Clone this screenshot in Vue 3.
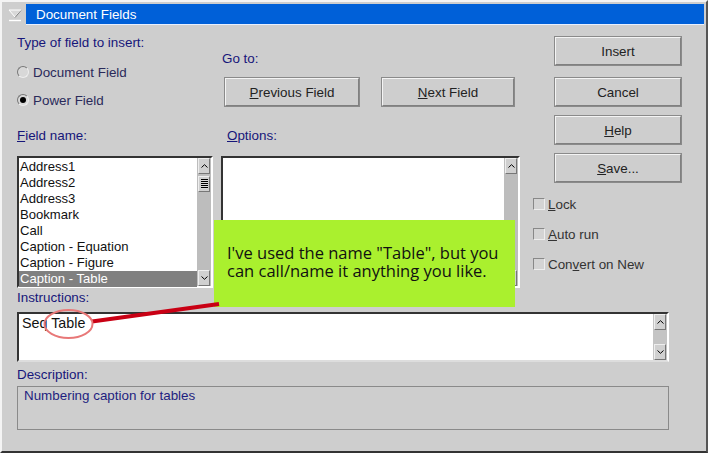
<script setup>
const fields = ['Address1', 'Address2', 'Address3', 'Bookmark', 'Call', 'Caption - Equation', 'Caption - Figure', 'Caption - Table']
</script>

<template>
  <div class="window">
    <div class="titlebar">
      <div class="sys">
        <svg width="14" height="14" viewBox="0 0 14 14">
          <path d="M1 2h12L7 9z" fill="#d8d8d8" stroke="#fff" stroke-width="1" />
          <path d="M1 12.5h12" stroke="#fff" stroke-width="1.4" />
          <path d="M7 9.5L13 2.5" stroke="#808080" stroke-width="1" />
        </svg>
      </div>
      <div class="title">Document Fields</div>
    </div>
    <div class="body">
      <div class="main">
        <div class="top">
          <div class="type">
            <div class="lbl">Type of field to insert:</div>
            <div class="radio first"><span class="dot"></span>Document Field</div>
            <div class="radio"><span class="dot on"></span>Power Field</div>
          </div>
          <div class="goto">
            <div class="lbl">Go to:</div>
            <div class="gobtns">
              <div class="btn prev"><span><u>P</u>revious Field</span></div>
              <div class="btn next"><span><u>N</u>ext Field</span></div>
            </div>
          </div>
        </div>
        <div class="labels">
          <div class="lbl fn"><u>F</u>ield name:</div>
          <div class="lbl op"><u>O</u>ptions:</div>
        </div>
        <div class="lists">
          <div class="list names">
            <div class="items">
              <div v-for="f in fields" :key="f" class="item" :class="{ sel: f === 'Caption - Table' }">{{ f }}</div>
            </div>
            <div class="sb">
              <div class="arrow"><svg width="7" height="4" viewBox="0 0 7 4"><path d="M0.5 3.5L3.5 0.7L6.5 3.5" fill="none" stroke="#000" /></svg></div>
              <div class="thumb"></div>
              <div class="gap"></div>
              <div class="arrow"><svg width="7" height="4" viewBox="0 0 7 4"><path d="M0.5 0.5L3.5 3.3L6.5 0.5" fill="none" stroke="#000" /></svg></div>
            </div>
          </div>
          <div class="list options">
            <div class="items"></div>
            <div class="sb">
              <div class="arrow"><svg width="7" height="4" viewBox="0 0 7 4"><path d="M0.5 3.5L3.5 0.7L6.5 3.5" fill="none" stroke="#000" /></svg></div>
              <div class="gap"></div>
              <div class="arrow"></div>
            </div>
          </div>
        </div>
      </div>
      <div class="side">
        <div class="btn act">Insert</div>
        <div class="btn act c2">Cancel</div>
        <div class="btn act c3"><span><u>H</u>elp</span></div>
        <div class="btn act c3"><span><u>S</u>ave...</span></div>
        <div class="checks">
          <div class="check"><span class="box"></span><span><u>L</u>ock</span></div>
          <div class="check"><span class="box"></span><span><u>A</u>uto run</span></div>
          <div class="check"><span class="box"></span><span>Con<u>v</u>ert on New</span></div>
        </div>
      </div>
      <div class="bottom">
        <div class="lbl">Instructions:</div>
        <div class="instr">
          <div class="instr-text">Seq Table</div>
          <div class="sb sb2">
            <div class="arrow"><svg width="7" height="4" viewBox="0 0 7 4"><path d="M0.5 3.5L3.5 0.7L6.5 3.5" fill="none" stroke="#000" /></svg></div>
            <div class="gap"></div>
            <div class="arrow"><svg width="7" height="4" viewBox="0 0 7 4"><path d="M0.5 0.5L3.5 3.3L6.5 0.5" fill="none" stroke="#000" /></svg></div>
          </div>
        </div>
        <div class="lbl dl">Description:</div>
        <div class="desc">Numbering caption for tables</div>
      </div>
    </div>

    <div class="callout">I've used the name "Table", but you can call/name it anything you like.</div>
    <svg class="marks" width="708" height="453" viewBox="0 0 708 453">
      <path d="M92 321.5L219 304" stroke="#c90014" stroke-width="4" fill="none" />
      <ellipse cx="68.5" cy="324" rx="24" ry="14" fill="none" stroke="#e87878" stroke-width="2" />
    </svg>
  </div>
</template>

<style>
html, body { margin: 0; background: #cecece; }
</style>

<style scoped>
.window {
  position: relative;
  width: 708px;
  height: 453px;
  box-sizing: border-box;
  background: #cecece;
  border-top: 2px solid #f4f4f4;
  border-left: 2px solid #f4f4f4;
  border-right: 2px solid #555;
  border-bottom: 2px solid #333;
  font-family: "Liberation Sans", Arial, sans-serif;
  font-size: 13.4px;
  color: #111;
  overflow: hidden;
}
.titlebar { display: flex; align-items: center; height: 21px; margin: 2px 2px 0 0; }
.sys { width: 24px; padding-left: 6px; box-sizing: border-box; height: 14px; }
.title { flex: 1; height: 21px; background: #0060d8; color: #fff; line-height: 21px; padding-left: 10px; font-size: 13.4px; border-bottom: 1px solid #e8f0ff; box-sizing: border-box; }
.body { display: grid; grid-template-columns: 522px 1fr; }
.main { padding-left: 15px; }
.lbl { color: #16167a; line-height: 15px; font-size: 13.4px; }
.top { display: flex; height: 106px; }
.type { width: 205px; padding-top: 10px; }
.radio { display: flex; align-items: center; gap: 4px; height: 16px; margin-top: 12px; color: #2a2a5a; }
.radio.first { margin-top: 14px; }
.dot { width: 12px; height: 12px; border-radius: 50%; box-sizing: border-box; background: #d8d8d8; border: 1px solid; border-color: #777 #eee #eee #777; position: relative; }
.dot.on::after { content: ""; position: absolute; left: 2px; top: 2px; width: 6px; height: 6px; border-radius: 50%; background: #000; }
.goto { padding-top: 26px; }
.gobtns { display: flex; gap: 21px; margin: 11px 0 0 2px; }
.btn { box-sizing: border-box; height: 30px; display: flex; align-items: center; justify-content: center; background: #cecece; border: 2px solid; border-color: #f4f4f4 #808080 #808080 #f4f4f4; outline: 1px solid #8a8a8a; outline-offset: -1px; font-size: 13.4px; color: #222; }
.prev { width: 136px; }
.next { width: 134px; }
.labels { display: flex; height: 28px; margin-top: -3px; }
.fn { width: 210px; }
.lists { display: flex; gap: 8px; }
.list { display: flex; box-sizing: border-box; height: 132px; border: 2px solid; border-color: #333 #fff #fff #333; background: #fff; }
.names { width: 196px; }
.options { width: 299px; }
.items { flex: 1; padding-top: 1px; min-width: 0; }
.item { height: 16px; line-height: 16px; padding-left: 1px; font-size: 13.1px; color: #111; }
.item.sel { background: #808080; color: #fff; }
.sb { width: 14px; background: #bdbdbd; display: flex; flex-direction: column; padding: 0 1px; box-sizing: border-box; }
.arrow { height: 16px; flex: none; display: flex; align-items: center; justify-content: center; background: #d0d0d0; border: 1px solid; border-color: #eee #777 #777 #eee; box-sizing: border-box; }
.thumb { height: 16px; margin-top: 2px; flex: none; border: 1px solid; border-color: #eee #777 #777 #eee; box-sizing: border-box; background: repeating-linear-gradient(#000 0 1px, #ddd 1px 2px) center / 7px 10px no-repeat #d0d0d0; }
.gap { flex: 1; }
.side { padding: 11px 0 0 10px; }
.act { width: 128px; margin-left: 20px; }
.c2 { margin-top: 11px; }
.c3 { margin-top: 8px; }
.checks { margin: 13px 0 0 -1px; }
.check { display: flex; align-items: center; gap: 3px; height: 16px; margin-bottom: 14px; font-size: 13.4px; color: #333; }
.box { width: 12px; height: 12px; box-sizing: border-box; background: #d4d4d4; border: 1px solid; border-color: #888 #eee #eee #888; }
.bottom { grid-column: 1 / -1; padding-left: 15px; margin-top: 2px; }
.instr { display: flex; box-sizing: border-box; width: 652px; height: 50px; margin-top: 7px; background: #fff; border: 2px solid; border-color: #333 #fff #ddd #333; }
.instr-text { flex: 1; padding: 1px 0 0 3px; font-size: 14.3px; line-height: 16px; color: #111; }
.sb2 { background: #c4c4c4; }
.dl { margin-top: 5px; }
.desc { box-sizing: border-box; width: 652px; height: 44px; margin-top: 4px; border: 1px solid #8a8a8a; padding: 1px 6px; color: #1e1e80; font-size: 13.4px; line-height: 16px; }
.marks { position: absolute; left: -2px; top: -2px; pointer-events: none; }
.callout { position: absolute; left: 212px; top: 218px; width: 301px; height: 87px; box-sizing: border-box; background: #aaf02e; padding: 24px 5px 0 13px; font-family: "Open Sans", sans-serif; font-size: 16.5px; line-height: 18px; color: #111; }
u { text-underline-offset: 1px; }
</style>
